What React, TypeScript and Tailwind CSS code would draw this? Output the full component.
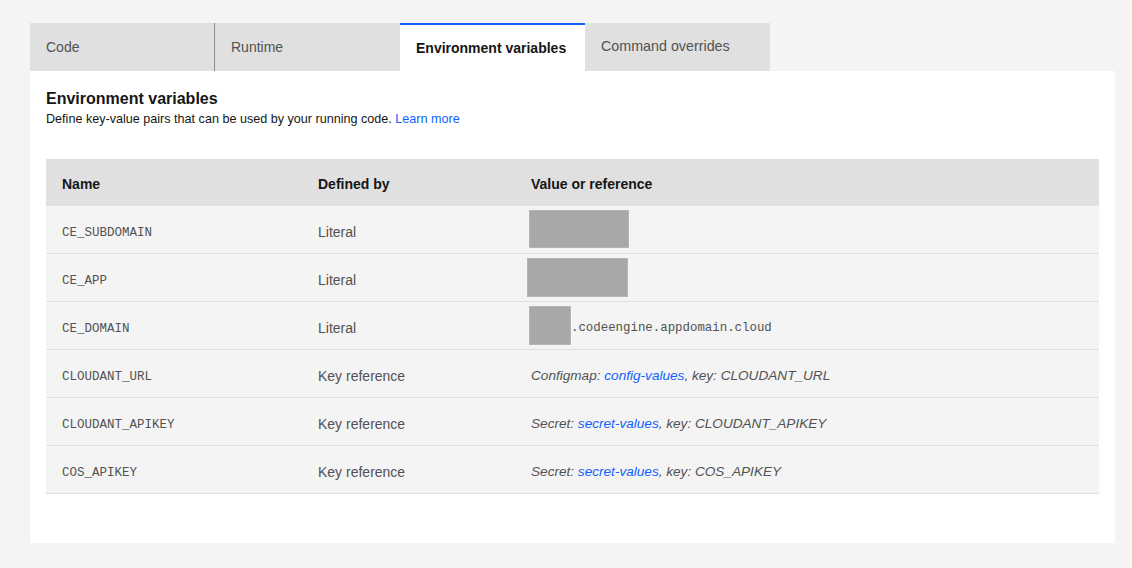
import React from "react";

const sans = { fontFamily: '"Liberation Sans", Arial, sans-serif' };

type Row = { name: string; by: string; value: React.ReactNode; text?: boolean };

const Block = ({ w, h, ml = 0, mt = 0 }: { w: number; h: number; ml?: number; mt?: number }) => (
  <span
    className="inline-block bg-[#a8a8a8] border border-[#b4b4b4]"
    style={{ width: w, height: h, marginLeft: ml, marginTop: mt }}
  />
);

const rows: Row[] = [
  { name: "CE_SUBDOMAIN", by: "Literal", value: <Block w={100} h={38} ml={-2} mt={-2} /> },
  { name: "CE_APP", by: "Literal", value: <Block w={101} h={39} ml={-4} /> },
  {
    name: "CE_DOMAIN",
    by: "Literal",
    value: (
      <span className="flex items-center">
        <Block w={42} h={39} ml={-2} />
        <span className="pt-[6px] font-['Liberation_Mono',monospace] text-[12.4px] text-[#525252]">
          .codeengine.appdomain.cloud
        </span>
      </span>
    ),
  },
  {
    name: "CLOUDANT_URL",
    by: "Key reference",
    text: true,
    value: (
      <span className="italic">
        Configmap: <span className="text-[#0f62fe]">config-values</span>, key: CLOUDANT_URL
      </span>
    ),
  },
  {
    name: "CLOUDANT_APIKEY",
    by: "Key reference",
    text: true,
    value: (
      <span className="italic">
        Secret: <span className="text-[#0f62fe]">secret-values</span>, key: CLOUDANT_APIKEY
      </span>
    ),
  },
  {
    name: "COS_APIKEY",
    by: "Key reference",
    text: true,
    value: (
      <span className="italic">
        Secret: <span className="text-[#0f62fe]">secret-values</span>, key: COS_APIKEY
      </span>
    ),
  },
];

export default function App() {
  return (
    <div className="w-[1132px] h-[568px] bg-[#f4f4f4] pt-[23px] pl-[30px]" style={sans}>
      <div className="flex h-[48px] text-[14px]">
        <div className="w-[185px] bg-[#e0e0e0] flex items-center pl-[16px] text-[#525252] border-r border-[#8d8d8d]">
          Code
        </div>
        <div className="w-[185px] bg-[#e0e0e0] flex items-center pl-[16px] text-[#525252]">Runtime</div>
        <div className="w-[185px] bg-white flex items-center pl-[16px] text-[#161616] font-semibold border-t-2 border-[#0f62fe]">
          Environment variables
        </div>
        <div className="w-[185px] bg-[#e0e0e0] flex items-center pl-[16px] text-[#525252] text-[14.3px]">
          Command overrides
        </div>
      </div>
      <div className="w-[1085px] h-[472px] bg-white pt-[18px] px-[16px]">
        <div className="text-[16px] font-semibold text-[#161616] leading-[20px]">Environment variables</div>
        <div className="text-[12.6px] text-[#161616] mt-[2px] leading-[16px]">
          Define key-value pairs that can be used by your running code.{" "}
          <span className="text-[#0f62fe]">Learn more</span>
        </div>
        <div className="mt-[32px] w-[1053px]">
          <div className="flex h-[47px] bg-[#e0e0e0] items-center pt-[4px] text-[14px] font-semibold text-[#161616]">
            <div className="w-[256px] pl-[16px]">Name</div>
            <div className="w-[213px] pl-[16px]">Defined by</div>
            <div className="flex-1 pl-[16px]">Value or reference</div>
          </div>
          {rows.map((r) => (
            <div
              key={r.name}
              className="flex h-[48px] bg-[#f4f4f4] items-center border-b border-[#e0e0e0] text-[14px] text-[#525252]"
            >
              <div className="w-[256px] pl-[16px] pt-[8px] font-['Liberation_Mono',monospace] text-[12.5px]">
                {r.name}
              </div>
              <div className="w-[213px] pl-[16px] pt-[6px]">{r.by}</div>
              <div className={`flex-1 pl-[16px] flex items-center text-[13.6px] ${r.text ? "pt-[5px]" : ""}`}>
                {r.value}
              </div>
            </div>
          ))}
        </div>
      </div>
    </div>
  );
}
